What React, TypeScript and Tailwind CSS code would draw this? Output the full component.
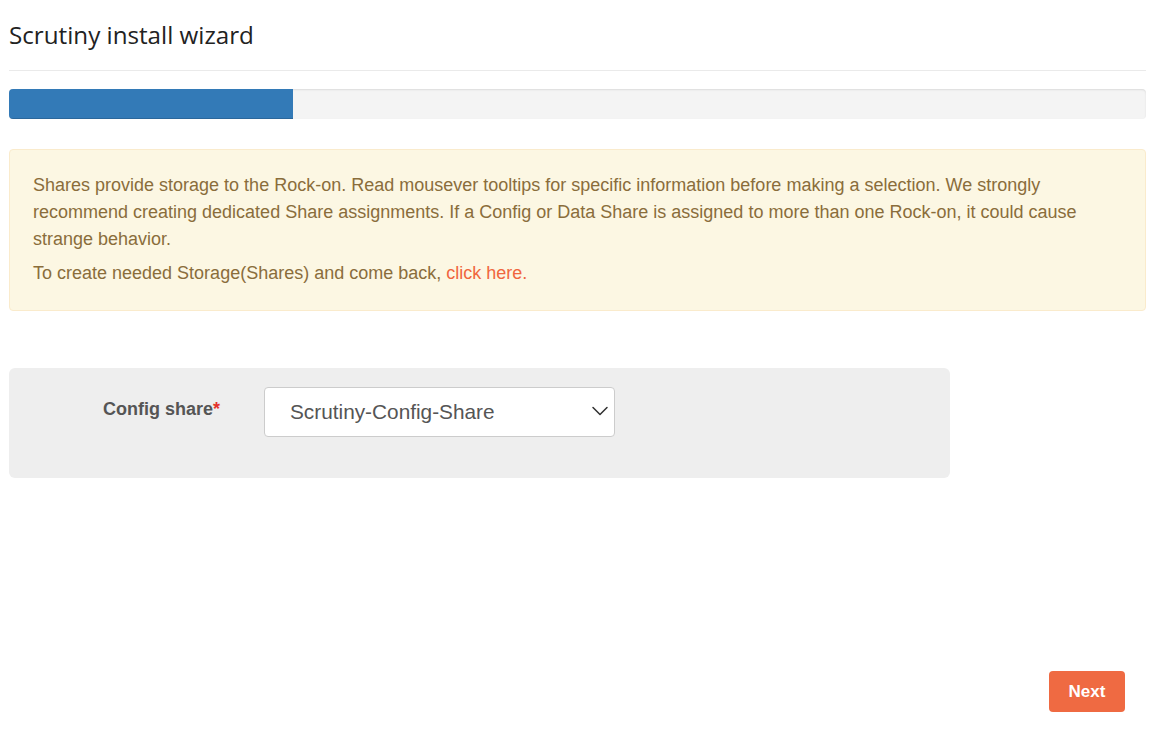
import { ChevronDown } from "lucide-react";

export default function App() {
  return (
    <div className="min-h-screen bg-white pl-[9px] pr-[10px] font-['Liberation_Sans',Arial,sans-serif]">
      <h1 className="pt-[18px] font-['Open_Sans',sans-serif] text-[24.2px] leading-[34px] font-normal text-[#222]">
        Scrutiny install wizard
      </h1>
      <hr className="mt-[18px] border-0 border-t border-[#eaeaea]" />

      <div className="mt-[18px] h-[30px] overflow-hidden rounded-[4px] bg-[#f4f4f4] shadow-[inset_0_1px_2px_rgba(0,0,0,0.1)]">
        <div className="h-full w-1/4 bg-[#337ab7] shadow-[inset_0_-1px_0_rgba(0,0,0,0.15)]" />
      </div>

      <div className="mt-[30px] rounded-[4px] border border-[#faebcc] bg-[#fcf7e3] px-[23px] pt-[22px] pb-[23px] text-[18px] leading-[27px] text-[#8a6d3b]">
        <p>
          Shares provide storage to the Rock-on. Read mousever tooltips for specific information before making a
          selection. We strongly recommend creating dedicated Share assignments. If a Config or Data Share is assigned
          to more than one Rock-on, it could cause strange behavior.
        </p>
        <p className="mt-[7px]">
          To create needed Storage(Shares) and come back, <a className="text-[#f0663e]">click here.</a>
        </p>
      </div>

      <div className="mt-[57px] flex h-[110px] w-[941px] items-start rounded-[6px] bg-[#eeeeee] pt-[19px]">
        <label className="mt-[12px] w-[213px] pr-[2px] text-right text-[18px] leading-[20px] font-bold text-[#555]">
          Config share<span className="text-[#e4322b]">*</span>
        </label>
        <div className="relative ml-[42px] h-[50px] w-[351px] rounded-[4px] border border-[#cccccc] bg-white">
          <span className="absolute left-[25px] top-[12px] text-[20.8px] leading-[24px] text-[#555]">
            Scrutiny-Config-Share
          </span>
          <ChevronDown className="absolute right-0 top-[9px] h-[28px] w-[28px] text-[#333]" strokeWidth={1.3} />
        </div>
      </div>

      <div className="mt-[193px] flex justify-end pr-[21px]">
        <button className="h-[41px] w-[76px] rounded-[4px] bg-[#ef6a42] text-[17px] font-bold text-white">
          Next
        </button>
      </div>
    </div>
  );
}
